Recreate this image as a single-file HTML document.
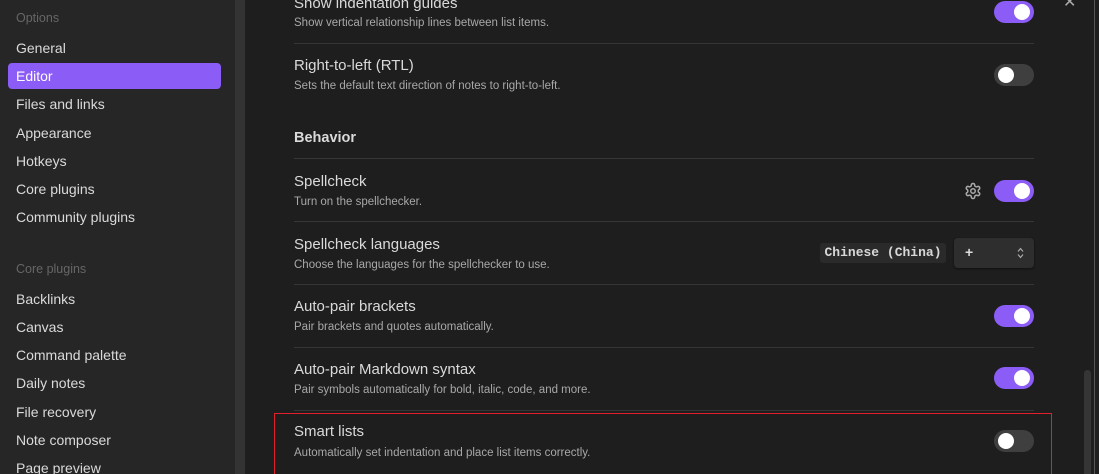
<!DOCTYPE html><html><head><style>
html,body{margin:0;width:1099px;height:474px;overflow:hidden;background:#1e1e1e;font-family:"Liberation Sans",sans-serif;position:relative}
.side{position:absolute;left:0;top:0;width:235px;height:474px;background:#262626}
.sb{position:absolute;left:235px;top:0;width:10px;height:474px;background:#333}
.side div{position:absolute;left:16px;font-size:14px;color:#dadada}
.side .h{font-size:12.5px;color:#666}
.sel{position:absolute;left:8px;top:63px;width:213px;height:26px;background:#8b5cf6;border-radius:4px}
.t{position:absolute;left:294px;font-size:15px;color:#dadada}
.d{position:absolute;left:294px;font-size:11.5px;color:#a8a8a8}
.hr{position:absolute;left:294px;width:740px;height:1px;background:#363636}
.tg{position:absolute;left:994px;width:40px;height:22px;border-radius:11px;background:#3f3f3f}
.tg i{position:absolute;top:3px;left:4px;width:16px;height:16px;border-radius:50%;background:#fff}
.tg.on{background:#8b5cf6}.tg.on i{left:20px}
</style></head><body>
<div class="side"></div>
<div class="sel"></div>
<div class="side" style="background:none">
<div class="h" style="top:11px">Options</div>
<div style="top:40px">General</div>
<div style="top:68px;color:#fff">Editor</div>
<div style="top:96px">Files and links</div>
<div style="top:125px">Appearance</div>
<div style="top:153px">Hotkeys</div>
<div style="top:181px">Core plugins</div>
<div style="top:209px">Community plugins</div>
<div class="h" style="top:262px">Core plugins</div>
<div style="top:291px">Backlinks</div>
<div style="top:319px">Canvas</div>
<div style="top:347px">Command palette</div>
<div style="top:375px">Daily notes</div>
<div style="top:404px">File recovery</div>
<div style="top:432px">Note composer</div>
<div style="top:460px">Page preview</div>
</div>
<div class="sb"></div>
<div class="t" style="top:-5px">Show indentation guides</div>
<div class="d" style="top:17px">Show vertical relationship lines between list items.</div>
<div class="tg on" style="top:1px"><i></i></div>
<div class="hr" style="top:43px"></div>
<div class="t" style="top:57px">Right-to-left (RTL)</div>
<div class="d" style="top:80px">Sets the default text direction of notes to right-to-left.</div>
<div class="tg" style="top:64px"><i></i></div>
<div class="t" style="top:130px;font-weight:bold;font-size:14.5px">Behavior</div>
<div class="hr" style="top:158px"></div>
<div class="t" style="top:173px">Spellcheck</div>
<div class="d" style="top:196px">Turn on the spellchecker.</div>
<svg style="position:absolute;left:964px;top:182px" width="18" height="18" viewBox="0 0 24 24" fill="none" stroke="#aaa" stroke-width="2"><path d="M12.22 2h-.44a2 2 0 0 0-2 2v.18a2 2 0 0 1-1 1.73l-.43.25a2 2 0 0 1-2 0l-.15-.08a2 2 0 0 0-2.730.73l-.22.38a2 2 0 0 0 .73 2.73l.15.1a2 2 0 0 1 1 1.72v.51a2 2 0 0 1-1 1.740l-.15.09a2 2 0 0 0-.73 2.73l.22.38a2 2 0 0 0 2.73.73l.15-.08a2 2 0 0 1 2 0l.43.25a2 2 0 0 1 1 1.73V20a2 2 0 0 0 2 2h.44a2 2 0 0 0 2-2v-.18a2 2 0 0 1 1-1.73l.43-.25a2 2 0 0 1 2 0l.15.08a2 2 0 0 0 2.73-.73l.22-.39a2 2 0 0 0-.73-2.73l-.15-.08a2 2 0 0 1-1-1.74v-.5a2 2 0 0 1 1-1.74l.15-.09a2 2 0 0 0 .73-2.73l-.22-.38a2 2 0 0 0-2.73-.73l-.15.08a2 2 0 0 1-2 0l-.43-.25a2 2 0 0 1-1-1.73V4a2 2 0 0 0-2-2z"/><circle cx="12" cy="12" r="3"/></svg>
<div class="tg on" style="top:180px"><i></i></div>
<div class="hr" style="top:221px"></div>
<div class="t" style="top:236px">Spellcheck languages</div>
<div class="d" style="top:259px">Choose the languages for the spellchecker to use.</div>
<div style="position:absolute;left:820px;top:243px;width:126px;height:20px;background:#2a2a2a;border-radius:3px;font-family:'Liberation Mono',monospace;font-weight:bold;font-size:13px;color:#d8d8d8;line-height:20px;text-align:center">Chinese (China)</div>
<div style="position:absolute;left:954px;top:238px;width:80px;height:30px;background:#2e2e2e;border-radius:4px;box-shadow:0 1px 2px #111"><span style="position:absolute;left:11px;top:6px;color:#ddd;font-size:14px;font-weight:bold">+</span><svg style="position:absolute;left:63px;top:9px" width="7" height="12" viewBox="0 0 7 12" fill="none" stroke="#aaa" stroke-width="1.2"><path d="M1 4.5L3.5 1.5L6 4.5M1 7.5L3.5 10.5L6 7.5"/></svg></div>
<div class="hr" style="top:284px"></div>
<div class="t" style="top:298px">Auto-pair brackets</div>
<div class="d" style="top:321px">Pair brackets and quotes automatically.</div>
<div class="tg on" style="top:305px"><i></i></div>
<div class="hr" style="top:347px"></div>
<div class="t" style="top:361px">Auto-pair Markdown syntax</div>
<div class="d" style="top:384px">Pair symbols automatically for bold, italic, code, and more.</div>
<div class="tg on" style="top:367px"><i></i></div>
<div class="hr" style="top:410px"></div>
<div class="t" style="top:423px">Smart lists</div>
<div class="d" style="top:447px">Automatically set indentation and place list items correctly.</div>
<div class="tg" style="top:430px"><i></i></div>
<div style="position:absolute;left:274px;top:413px;width:776px;height:80px;border:1px solid #e0202a"></div>
<div style="position:absolute;left:1063px;top:-8px;color:#aaa;font-size:16px">✕</div>
<div style="position:absolute;left:1084px;top:370px;width:7px;height:110px;background:#353535;border-radius:4px"></div>
<div style="position:absolute;left:1094px;top:0;width:1px;height:474px;background:#555"></div>
</body></html>
